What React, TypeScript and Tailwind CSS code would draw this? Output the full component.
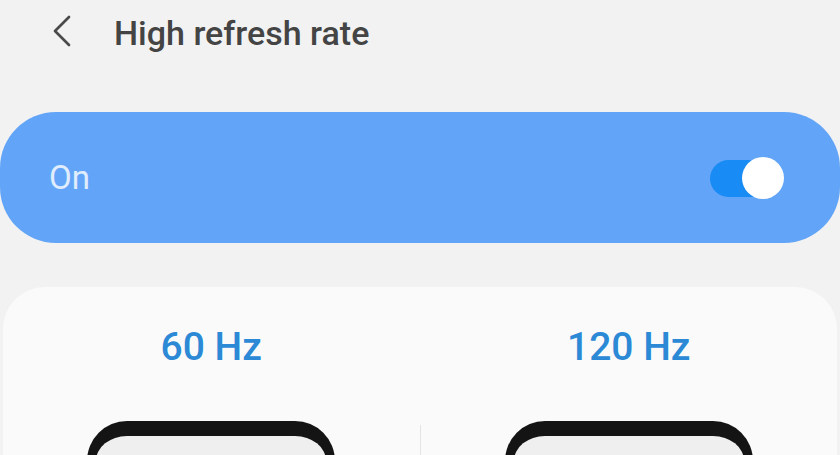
import { ChevronLeft } from "lucide-react";

function Toggle() {
  return (
    <div className="relative h-[42px] w-[74px]">
      <div className="absolute left-0 top-[3px] h-[37px] w-[60px] rounded-full bg-[#188bf5]" />
      <div className="absolute right-0 top-0 h-[42px] w-[42px] rounded-full bg-white" />
    </div>
  );
}

function PhoneTop() {
  return (
    <div className="h-[40px] w-[248px] rounded-t-[42px] border-x-[9px] border-t-[15px] border-[#141414] bg-[#efefef]" />
  );
}

export default function App() {
  return (
    <div
      className="h-[455px] w-[840px] overflow-hidden bg-[#f2f2f2]"
      style={{ fontFamily: "Roboto, 'Liberation Sans', sans-serif" }}
    >
      <div className="flex h-[112px] items-start pt-[14px]">
        <ChevronLeft className="ml-[34px] mt-[-11px] h-[56px] w-[56px] shrink-0 text-[#4a4a4a]" strokeWidth={1.15} />
        <div className="ml-[24px] text-[34px] leading-[38px] font-medium text-[#444444]">High refresh rate</div>
      </div>

      <div className="flex h-[131px] items-center justify-between rounded-[56px] bg-[#62a4f7] pl-[49px] pr-[56px]">
        <span className="text-[33px] text-white/80">On</span>
        <Toggle />
      </div>

      <div className="mx-[3px] mt-[44px] rounded-t-[42px] bg-[#fafafa] pt-[38px]">
        <div className="flex">
          <div className="flex w-1/2 flex-col items-center">
            <span className="text-[39px] leading-[44px] font-medium text-[#2b89d6]">60 Hz</span>
            <div className="mt-[52px]">
              <PhoneTop />
            </div>
          </div>
          <div className="mt-[100px] h-[40px] w-px self-start bg-[#e4e4e4]" />
          <div className="flex w-1/2 flex-col items-center">
            <span className="text-[39px] leading-[44px] font-medium text-[#2b89d6]">120 Hz</span>
            <div className="mt-[52px]">
              <PhoneTop />
            </div>
          </div>
        </div>
      </div>
    </div>
  );
}
